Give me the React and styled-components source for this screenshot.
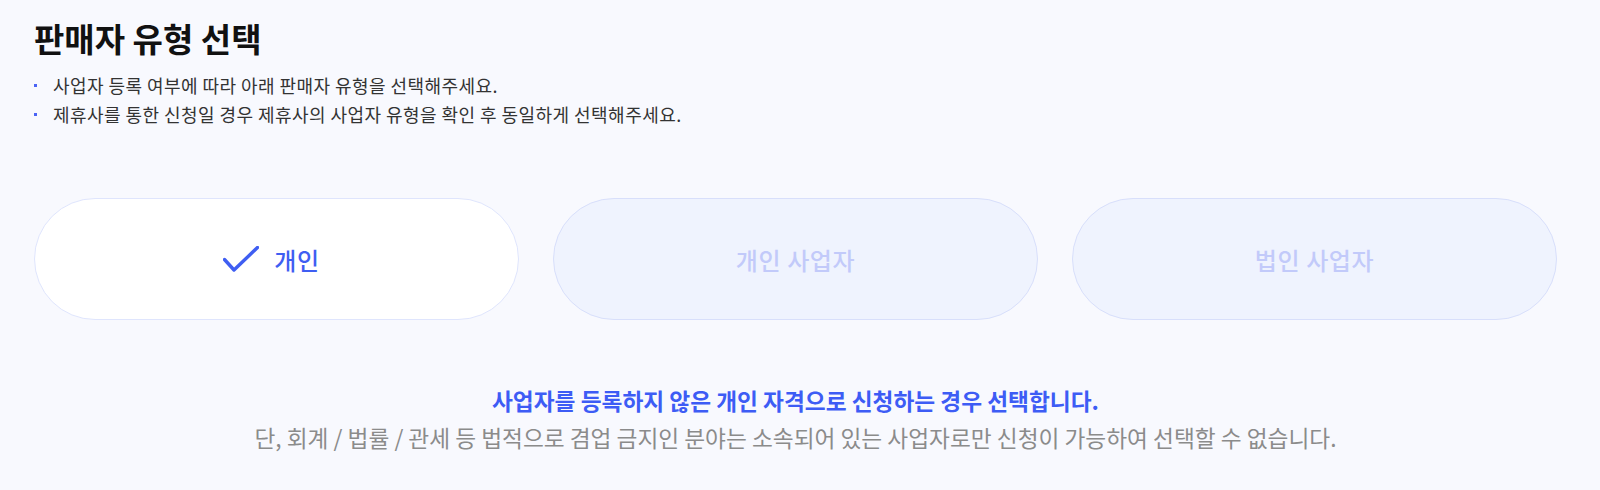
import React, { useState } from 'react';
import styled, { createGlobalStyle } from 'styled-components';

const GlobalStyle = createGlobalStyle`
  body {
    margin: 0;
    background: #f8f9fe;
    font-family: "Noto Sans CJK KR", "Noto Sans", sans-serif;
    color: #111;
  }
`;

const Page = styled.div`
  padding: 18px 43px 0 34px;
`;

const Title = styled.h1`
  margin: 0;
  font-size: 33px;
  line-height: 40px;
  font-weight: 700;
  letter-spacing: 0;
  color: #111;
`;

const Guide = styled.ul`
  margin: 13px 0 0;
  padding: 0;
  list-style: none;
`;

const GuideItem = styled.li`
  display: flex;
  align-items: center;
  gap: 16px;
  font-size: 18px;
  line-height: 29px;
  letter-spacing: 0.45px;
  color: #333;
`;

const Dot = styled.span`
  width: 3px;
  height: 3px;
  background: #4a63f5;
  flex: none;
`;

const Types = styled.div`
  margin-top: 69px;
  display: grid;
  grid-template-columns: repeat(3, 1fr);
  gap: 34px;
`;

const TypeCard = styled.button`
  height: 122px;
  border-radius: 61px;
  border: 1.5px solid ${p => (p.$active ? '#dfe5fd' : '#d8dffb')};
  background: ${p => (p.$active ? '#ffffff' : '#eff3fe')};
  color: ${p => (p.$active ? '#3f5ef2' : '#c2cafa')};
  font-family: inherit;
  font-size: 24px;
  font-weight: 500;
  letter-spacing: 0.6px;
  display: flex;
  align-items: center;
  justify-content: center;
  gap: 15px;
  cursor: pointer;
  padding: 0;
`;

const CheckMark = styled.svg`
  margin-left: -10px;
  flex: none;
`;

const Notice = styled.div`
  margin-top: 62px;
  text-align: center;
  font-size: 22.7px;
  line-height: 37px;
`;

const NoticeMain = styled.p`
  margin: 0;
  color: #3d5cf5;
  font-weight: 700;
`;

const NoticeSub = styled.p`
  margin: 0;
  color: #8b8b8b;
  font-weight: 400;
`;

const Check = () => (
  <CheckMark width="36" height="27" viewBox="0 0 36 27" fill="none">
    <polyline
      points="1.5,13.5 11,24 34.5,1.5"
      stroke="#3f5ef2"
      strokeWidth="3.4"
      strokeLinecap="round"
      strokeLinejoin="round"
    />
  </CheckMark>
);

const types = ['개인', '개인 사업자', '법인 사업자'];

export default function App() {
  const [selected, setSelected] = useState(0);
  return (
    <Page>
      <GlobalStyle />
      <Title>판매자 유형 선택</Title>
      <Guide>
        <GuideItem>
          <Dot />
          사업자 등록 여부에 따라 아래 판매자 유형을 선택해주세요.
        </GuideItem>
        <GuideItem>
          <Dot />
          제휴사를 통한 신청일 경우 제휴사의 사업자 유형을 확인 후 동일하게 선택해주세요.
        </GuideItem>
      </Guide>
      <Types>
        {types.map((t, i) => (
          <TypeCard key={t} $active={selected === i} onClick={() => setSelected(i)}>
            {selected === i && <Check />}
            {t}
          </TypeCard>
        ))}
      </Types>
      <Notice>
        <NoticeMain>사업자를 등록하지 않은 개인 자격으로 신청하는 경우 선택합니다.</NoticeMain>
        <NoticeSub>
          단, 회계 / 법률 / 관세 등 법적으로 겸업 금지인 분야는 소속되어 있는 사업자로만 신청이 가능하여 선택할 수 없습니다.
        </NoticeSub>
      </Notice>
    </Page>
  );
}
